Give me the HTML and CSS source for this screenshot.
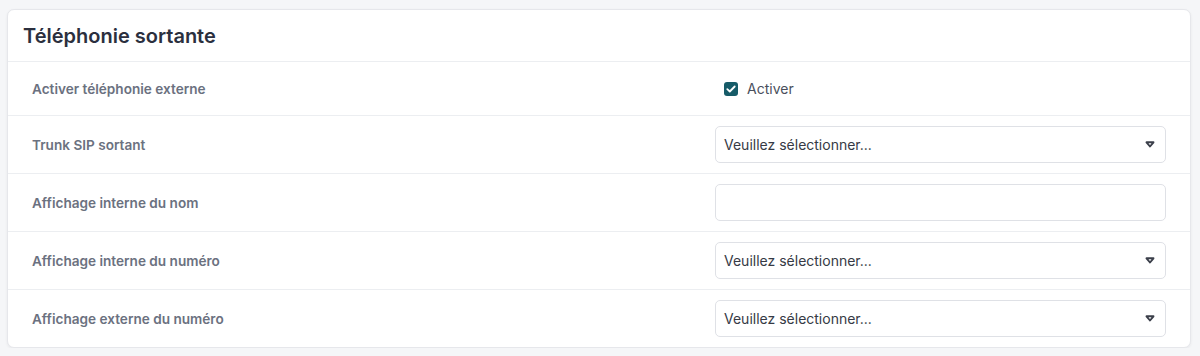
FILE: index.html
```html
<!DOCTYPE html>
<html lang="fr">
<head>
<meta charset="utf-8">
<title>Téléphonie sortante</title>
<link rel="stylesheet" href="styles.css">
</head>
<body>
<section class="card">
  <header class="card-header"><h2 class="card-title">Téléphonie sortante</h2></header>
  <div class="row row-check">
    <div class="label">Activer téléphonie externe</div>
    <div class="field">
      <label class="check">
        <span class="box"><svg width="10" height="8" viewBox="0 0 10 8"><path d="M1.3 4.2 3.8 6.5 8.7 1.5" fill="none" stroke="#fff" stroke-width="1.8" stroke-linecap="round" stroke-linejoin="round"/></svg></span>
        <span class="check-text">Activer</span>
      </label>
    </div>
  </div>
  <div class="row">
    <div class="label">Trunk SIP sortant</div>
    <div class="field"><div class="select"><span>Veuillez sélectionner...</span><svg class="caret" width="10" height="7" viewBox="0 0 10 7"><path d="M1.5 1.3h7L5 5.5z" fill="none" stroke="#3b3f4a" stroke-width="1.9" stroke-linejoin="round"/></svg></div></div>
  </div>
  <div class="row">
    <div class="label">Affichage interne du nom</div>
    <div class="field"><div class="input"></div></div>
  </div>
  <div class="row">
    <div class="label">Affichage interne du numéro</div>
    <div class="field"><div class="select"><span>Veuillez sélectionner...</span><svg class="caret" width="10" height="7" viewBox="0 0 10 7"><path d="M1.5 1.3h7L5 5.5z" fill="none" stroke="#3b3f4a" stroke-width="1.9" stroke-linejoin="round"/></svg></div></div>
  </div>
  <div class="row last">
    <div class="label">Affichage externe du numéro</div>
    <div class="field"><div class="select"><span>Veuillez sélectionner...</span><svg class="caret" width="10" height="7" viewBox="0 0 10 7"><path d="M1.5 1.3h7L5 5.5z" fill="none" stroke="#3b3f4a" stroke-width="1.9" stroke-linejoin="round"/></svg></div></div>
  </div>
</section>
</body>
</html>
```
FILE: styles.css
```css
html, body {
  margin: 0;
  padding: 0;
  background: #f5f6f8;
  font-family: Inter, "Noto Sans", sans-serif;
}
.card {
  margin: 9px 9px 0 7px;
  background: #fff;
  border: 1px solid #e6e7eb;
  border-radius: 7px;
  box-shadow: 0 1px 3px rgba(20, 24, 40, 0.06);
}
.card-header {
  height: 51px;
  display: flex;
  align-items: center;
  padding: 0 15px;
  border-bottom: 1px solid #eceef1;
}
.card-title {
  margin: 0;
  font-size: 20px;
  font-weight: 600;
  color: #2b2f3e;
}
.row {
  display: grid;
  grid-template-columns: 683px 1fr;
  align-items: center;
  padding: 10px 24px 10px;
  border-bottom: 1px solid #eceef1;
}
.row.last { border-bottom: 0; }
.row-check { height: 33px; }
.label {
  font-size: 13.6px;
  font-weight: 600;
  color: #6b7180;
}
.check {
  display: flex;
  align-items: center;
  gap: 9px;
  padding-left: 9px;
}
.box {
  width: 14px;
  height: 14px;
  border-radius: 3px;
  background: #165b68;
  display: flex;
  align-items: center;
  justify-content: center;
}
.check-text {
  font-size: 14px;
  color: #4a4f5c;
}
.select, .input {
  box-sizing: border-box;
  height: 37px;
  border: 1px solid #dfe1e6;
  border-radius: 5px;
  background: #fff;
}
.select {
  display: flex;
  align-items: center;
  justify-content: space-between;
  padding: 0 10px 0 8px;
  font-size: 14px;
  color: #363a45;
}
.caret { display: block; }
```
